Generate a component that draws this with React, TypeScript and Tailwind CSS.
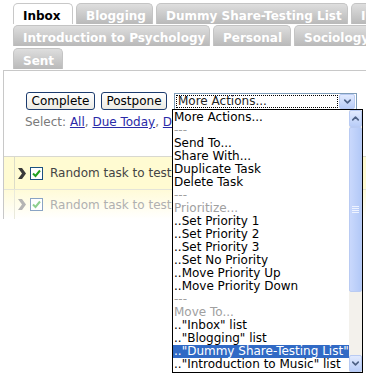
import { ChevronDown, ChevronUp } from "lucide-react";

const font = "font-['DejaVu_Sans',Verdana,sans-serif]";

function Tab({ label, width, active }: { label: string; width: number; active?: boolean }) {
  return (
    <div
      style={{ width }}
      className={
        active
          ? "h-[21px] shrink-0 rounded-t-[5px] border border-b-0 border-[#c8c8c8] bg-white pl-[9px] pt-[3px] text-[12px] font-bold text-black"
          : "h-[21px] shrink-0 rounded-t-[5px] border border-b-0 border-[#c4c4c4] bg-gradient-to-b from-[#dedede] to-[#b9b9b9] pl-[9px] pt-[3px] text-[12px] font-bold text-white"
      }
    >
      <span className="whitespace-nowrap">{label}</span>
    </div>
  );
}

function XpButton({ label, width }: { label: string; width: number }) {
  return (
    <div
      style={{ width }}
      className="flex h-[18px] shrink-0 items-center justify-center rounded-[3px] border border-[#1c3b6e] bg-gradient-to-b from-white to-[#ecebe4] text-[12px] text-black"
    >
      {label}
    </div>
  );
}

function Check({ faded }: { faded?: boolean }) {
  return (
    <div
      className={
        faded
          ? "flex h-[13px] w-[13px] items-center justify-center border border-[#8aa4c4] bg-white"
          : "flex h-[13px] w-[13px] items-center justify-center border border-[#1c5180] bg-white"
      }
    >
      <svg width="9" height="9" viewBox="0 0 9 9">
        <path d="M1 4.5 L3.5 7 L8 1.5" fill="none" stroke={faded ? "#8fd08f" : "#21a121"} strokeWidth="2" />
      </svg>
    </div>
  );
}

function Arrow({ color }: { color: string }) {
  return (
    <svg width="8" height="11" viewBox="0 0 8 11">
      <path d="M0 0 L4 0 L8 5.5 L4 11 L0 11 L4 5.5 Z" fill={color} />
    </svg>
  );
}

const items: { text: string; kind?: "gray" | "sel" }[] = [
  { text: "More Actions..." },
  { text: "---", kind: "gray" },
  { text: "Send To..." },
  { text: "Share With..." },
  { text: "Duplicate Task" },
  { text: "Delete Task" },
  { text: "---", kind: "gray" },
  { text: "Prioritize...", kind: "gray" },
  { text: "..Set Priority 1" },
  { text: "..Set Priority 2" },
  { text: "..Set Priority 3" },
  { text: "..Set No Priority" },
  { text: "..Move Priority Up" },
  { text: "..Move Priority Down" },
  { text: "---", kind: "gray" },
  { text: "Move To...", kind: "gray" },
  { text: '.."Inbox" list' },
  { text: '.."Blogging" list' },
  { text: '.."Dummy Share-Testing List"', kind: "sel" },
  { text: '.."Introduction to Music" list' },
];

export default function App() {
  return (
    <div className={`relative h-[375px] w-[366px] overflow-hidden bg-white ${font}`}>
      {/* tabs */}
      <div className="flex flex-col gap-[1px] pl-[13px] pt-[3px]">
        <div className="flex gap-[3px]">
          <Tab label="Inbox" width={60} active />
          <Tab label="Blogging" width={77} />
          <Tab label="Dummy Share-Testing List" width={192} />
          <Tab label="Introduction to Music" width={80} />
        </div>
        <div className="flex gap-[3px]">
          <Tab label="Introduction to Psychology" width={197} />
          <Tab label="Personal" width={78} />
          <Tab label="Sociology" width={90} />
        </div>
        <div className="flex gap-[3px] pt-[1px]">
          <Tab label="Sent" width={50} />
        </div>
      </div>

      {/* panel */}
      <div className="ml-[3px] mt-[1px] border-l border-t border-[#c8c8c8]">
        <div className="flex items-center gap-[6px] pl-[22px] pt-[21px]">
          <XpButton label="Complete" width={69} />
          <XpButton label="Postpone" width={66} />
          <div className="ml-[1px] flex h-[17px] w-[183px] items-center border border-[#7f9db9] bg-white p-[1px]">
            <div className="flex h-full flex-1 items-center border border-dotted border-black pl-[1px] text-[12px] text-[#222]">
              More Actions...
            </div>
            <div className="ml-[1px] flex h-[15px] w-[16px] items-center justify-center rounded-[2px] border border-[#b9cbf3] bg-gradient-to-b from-[#e1eafe] to-[#b9cdf8]">
              <ChevronDown size={11} strokeWidth={3.5} className="text-[#4d6185]" />
            </div>
          </div>
        </div>
        <div className="pl-[21px] pt-[3px] text-[12px] text-[#7a7a7a]">
          Select: <span className="text-[#2a2aa8] underline">All</span>,{" "}
          <span className="text-[#2a2aa8] underline">Due Today</span>,{" "}
          <span className="text-[#2a2aa8] underline">Due Tomorrow</span>
        </div>

        <div className="mt-[25px] border-t border-[#d8d8d0]">
          <div className="flex h-[32px] bg-[#fffbd2]">
            <div className="w-[11px] border-r border-[#dcdcc8]" />
            <div className="flex items-center gap-[4px] pl-[3px] text-[12px] text-[#444]">
              <Arrow color="#3a3a3a" />
              <Check />
              <span className="ml-[3px] whitespace-nowrap">Random task to test with</span>
            </div>
          </div>
          <div className="flex h-[30px] border-t border-[#e4e4d8] bg-gradient-to-b from-[#fffbd8] to-white">
            <div className="w-[11px] border-r border-[#eaeadc]" />
            <div className="flex items-center gap-[4px] pl-[3px] text-[12px] text-[#b0b0b0]">
              <Arrow color="#b4b4b4" />
              <Check faded />
              <span className="ml-[3px] whitespace-nowrap">Random task to test with</span>
            </div>
          </div>
        </div>
      </div>

      {/* open dropdown list */}
      <div className="absolute left-[172px] top-[109px] flex h-[264px] w-[191px] border border-black bg-white">
        <div className="flex flex-1 flex-col pt-[1px] text-[12px] leading-[13px]">
          {items.map((it, i) => (
            <div
              key={i}
              className={
                it.kind === "sel"
                  ? "h-[13px] whitespace-nowrap bg-[#316ac5] pl-[1px] text-white"
                  : it.kind === "gray"
                    ? "h-[13px] whitespace-nowrap pl-[1px] text-[#a0a0a0]"
                    : "h-[13px] whitespace-nowrap pl-[1px] text-black"
              }
            >
              {it.text}
            </div>
          ))}
        </div>
        <div className="flex w-[17px] flex-col bg-[#f3f1ec]">
          <div className="flex h-[17px] items-center justify-center rounded-[2px] border border-[#b9cbf3] bg-gradient-to-b from-[#e1eafe] to-[#b9cdf8]">
            <ChevronUp size={11} strokeWidth={3.5} className="text-[#4d6185]" />
          </div>
          <div className="flex h-[165px] items-center justify-center rounded-[2px] border border-[#b9cbf3] bg-gradient-to-r from-[#c9d8fc] to-[#b3c9f7]">
            <div className="flex flex-col gap-[1px]">
              <div className="h-[1px] w-[7px] bg-[#eef3ff]" />
              <div className="h-[1px] w-[7px] bg-[#eef3ff]" />
              <div className="h-[1px] w-[7px] bg-[#eef3ff]" />
              <div className="h-[1px] w-[7px] bg-[#eef3ff]" />
            </div>
          </div>
          <div className="flex-1" />
          <div className="flex h-[17px] items-center justify-center rounded-[2px] border border-[#b9cbf3] bg-gradient-to-b from-[#e1eafe] to-[#b9cdf8]">
            <ChevronDown size={11} strokeWidth={3.5} className="text-[#4d6185]" />
          </div>
        </div>
      </div>
    </div>
  );
}
